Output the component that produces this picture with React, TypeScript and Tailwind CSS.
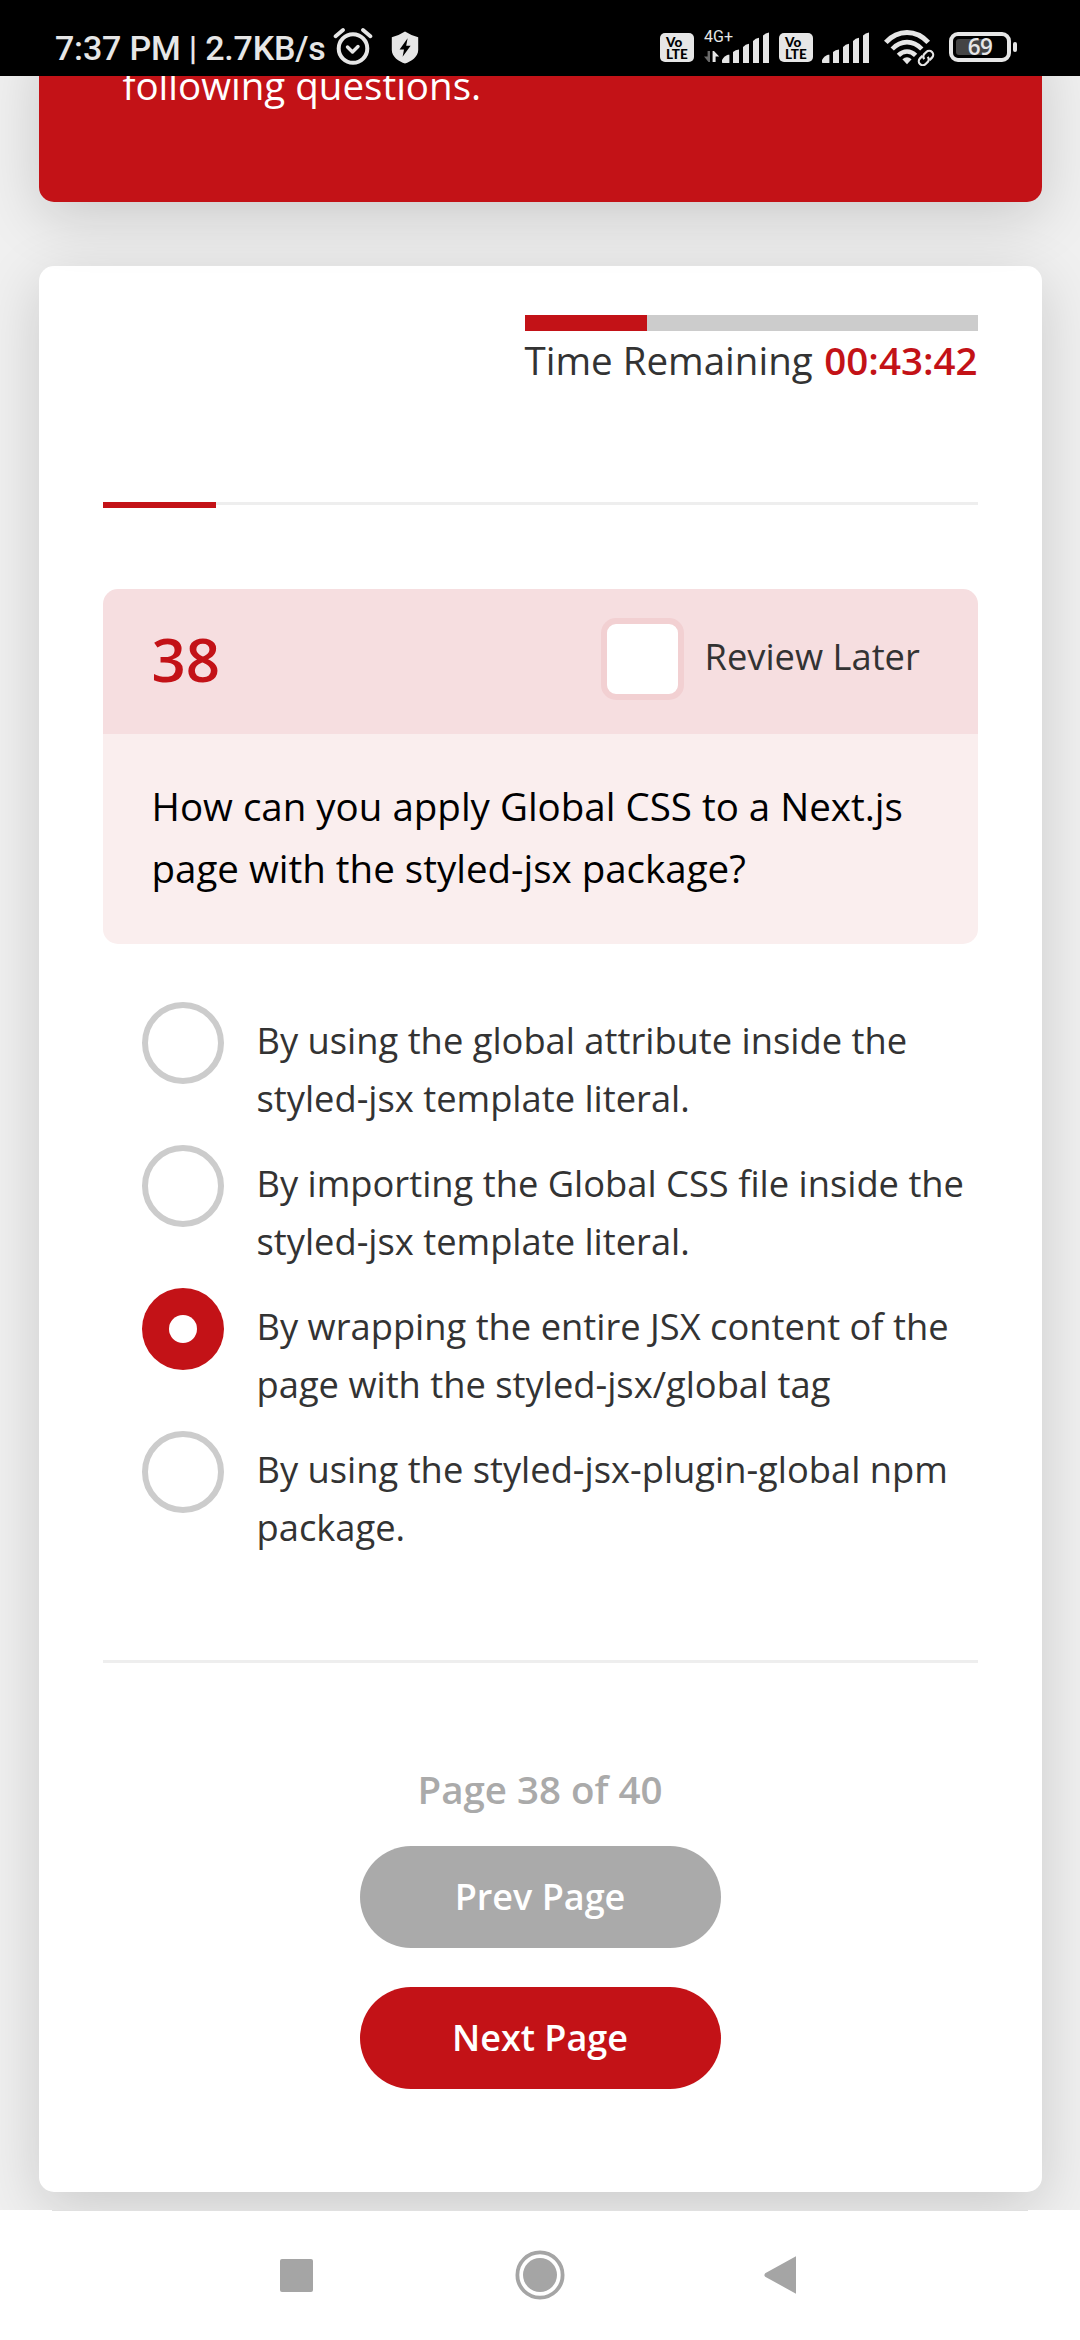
import React from "react";

const FG = "#e6e6e6";

function AlarmIcon() {
  return (
    <svg width="40" height="40" viewBox="0 0 40 40" fill="none" stroke={FG} strokeLinecap="round" strokeLinejoin="round" className="shrink-0">
      <circle cx="20" cy="21.5" r="14.3" strokeWidth="4" />
      <path d="M14.5 20 L19.5 25 L25 19.5" strokeWidth="3.4" />
      <path d="M2.6 9.2 L10 3" strokeWidth="3.8" />
      <path d="M37.4 9.2 L30 3" strokeWidth="3.8" />
    </svg>
  );
}

function ShieldIcon() {
  return (
    <svg width="28" height="33" viewBox="0 0 28 33" className="shrink-0">
      <path d="M14 .6 Q20 4.6 27.2 6.2 V19 C27.2 26 20 30.5 14 32.6 C8 30.5 .8 26 .8 19 V6.2 Q8 4.6 14 .6 Z" fill={FG} />
      <path d="M16.6 7.2 L8.6 18.6 H13 L11.6 25.8 L19.6 14.8 H15.2 Z" fill="#000" />
    </svg>
  );
}

function VoLte() {
  return (
    <div className="flex h-[29px] w-[34px] shrink-0 flex-col rounded-[5px] bg-[#e6e6e6] pl-[6px] pt-[3px] font-[Lato,sans-serif] text-[13.5px] font-black leading-[12px] text-black">
      <span>Vo</span>
      <span>LTE</span>
    </div>
  );
}

function Signal() {
  return (
    <svg width="48" height="31" viewBox="0 0 48 31" fill={FG} className="shrink-0">
      <path d="M.5 31 Q0 31 0 30 V28 Q2.5 23.6 6 22.8 H7.4 V31 Z" />
      <path d="M11 31 V20 Q13.5 17.8 17 17.6 V31 Z" />
      <path d="M21 31 V15 Q23.5 12 27 11.8 V31 Z" />
      <path d="M31 31 V9 Q33.5 6 37 5.8 V31 Z" />
      <path d="M41 31 V3.5 Q43.5 .6 47 .4 V31 Z" />
    </svg>
  );
}

function WifiIcon() {
  return (
    <svg width="51" height="36" viewBox="0 0 51 36" fill="none" stroke={FG} className="shrink-0">
      <path d="M1.8 12.4 C14 -.8 32 -.8 44.2 12.4" strokeWidth="5" />
      <path d="M8.2 19 C17 9.8 29 9.8 37.8 19" strokeWidth="4.6" />
      <path d="M14.4 25.4 C19.6 20.2 26.4 20.2 31.6 25.4" strokeWidth="4.6" />
      <path d="M23 34.2 L18.4 29.2 Q23 25.2 27.6 29.2 Z" fill={FG} stroke="none" />
      <g transform="rotate(-45 42 28)">
        <rect x="31.5" y="22" width="21" height="12" rx="6" fill="#000" stroke="none" />
        <path d="M41 24 H37.5 A4 4 0 0 0 37.5 32 H41 A4 4 0 0 0 44 28.4" strokeWidth="2.2" />
        <path d="M43 32 H46.5 A4 4 0 0 0 46.5 24 H43 A4 4 0 0 0 40 27.6" strokeWidth="2.2" />
      </g>
    </svg>
  );
}

function StatusBar() {
  return (
    <header className="relative z-20 flex h-[76px] shrink-0 items-start bg-black font-[Roboto,sans-serif] text-[#e6e6e6]">
      <span className="ml-[55px] mt-[28px] w-[272px] whitespace-nowrap text-[34px] font-medium leading-[40px] tracking-[-0.2px]">
        7:37 PM | 2.7KB/s
      </span>
      <div className="ml-[6px] mt-[27px]"><AlarmIcon /></div>
      <div className="ml-[18px] mt-[31px]"><ShieldIcon /></div>
      <div className="ml-auto mt-[33px]"><VoLte /></div>
      <div className="ml-[10px] mt-[29px] w-[30px]">
        <div className="whitespace-nowrap text-[16px] leading-[16px]">4G+</div>
        <svg width="16" height="12" viewBox="0 0 16 12" className="mt-[6px]">
          <path d="M6 0 V11 H4.5 L0 5.5 H3.6 V0 Z" fill="#6a6a6a" />
          <path d="M8.6 11 V0 H10 L15.2 5.5 H11.6 V11 Z" fill={FG} />
        </svg>
      </div>
      <div className="-ml-[12px] mt-[32px]"><Signal /></div>
      <div className="ml-[9px] mt-[33px]"><VoLte /></div>
      <div className="ml-[9px] mt-[32px]"><Signal /></div>
      <div className="ml-[14px] mt-[30px]"><WifiIcon /></div>
      <div className="ml-[14px] mt-[32px] flex items-center">
        <div className="relative flex h-[30px] w-[62px] items-center justify-center rounded-[9px] border-4 border-[#e6e6e6]">
          <div className="absolute left-[3px] top-[3px] h-4 w-[33px] rounded-[3px] bg-[#444]" />
          <span className="relative font-['Open_Sans',sans-serif] text-[22.5px] font-semibold leading-[22px] tracking-[-0.5px]">69</span>
        </div>
        <div className="ml-[2px] h-[10px] w-[4px] rounded-[2px] bg-[#e6e6e6]" />
      </div>
      <div className="w-[63px] shrink-0" />
    </header>
  );
}

const options = [
  { lines: ["By using the global attribute inside the", "styled-jsx template literal."], selected: false },
  { lines: ["By importing the Global CSS file inside the", "styled-jsx template literal."], selected: false },
  { lines: ["By wrapping the entire JSX content of the", "page with the styled-jsx/global tag"], selected: true },
  { lines: ["By using the styled-jsx-plugin-global npm", "package."], selected: false },
];

function Radio({ selected }: { selected: boolean }) {
  return selected ? (
    <span className="flex size-[82px] shrink-0 items-center justify-center rounded-full bg-[#c31217]">
      <span className="size-[28px] rounded-full bg-white" />
    </span>
  ) : (
    <span className="size-[82px] shrink-0 rounded-full border-[6px] border-[#ccc] bg-white" />
  );
}

function QuizCard() {
  return (
    <section className="mx-auto mt-[64px] flex h-[1926px] w-[1003px] shrink-0 flex-col rounded-[15px] bg-white px-[64px] pt-[49px] shadow-[0_15px_60px_rgba(0,0,0,0.16)]">
      <div className="w-[453px] self-end">
        <div className="h-4 bg-[#ccc]">
          <div className="h-4 w-[122px] bg-[#c31217]" />
        </div>
        <p className="flex justify-between whitespace-nowrap text-[38.5px] leading-[58px] text-[#333]">
          <span>Time Remaining</span>
          <span className="font-semibold text-[#c31217]">00:43:42</span>
        </p>
      </div>

      <div className="mt-[113px] h-[6px]">
        <div className="h-[3px] bg-[#eee]">
          <div className="h-[6px] w-[113px] bg-[#c31217]" />
        </div>
      </div>

      <div className="mt-[81px] overflow-hidden rounded-[15px]">
        <div className="flex h-[145px] items-center bg-[#f6dee0] pb-[5px] pl-[49px]">
          <span className="text-[60px] font-semibold leading-[82px] text-[#c31217]">38</span>
          <span className="ml-auto h-[82px] w-[83px] rounded-[15px] border-[6px] border-[#f2d0d2] bg-white" />
          <span className="mb-[6px] ml-[21px] w-[273px] whitespace-nowrap text-[36.3px] leading-[49px] text-[#333]">Review Later</span>
        </div>
        <div className="h-[210px] whitespace-nowrap bg-[#faeeee] pl-[49px] pt-[41px] text-[38.5px] leading-[62px] text-black">
          How can you apply Global CSS to a Next.js
          <br />
          page with the styled-jsx package?
        </div>
      </div>

      <ul className="mt-[58px] pl-[39px]">
        {options.map((o) => (
          <li key={o.lines[0]} className="flex h-[143px]">
            <Radio selected={o.selected} />
            <p className="ml-[33px] mt-[9px] whitespace-nowrap text-[36.3px] leading-[58px] text-[#333]">
              {o.lines[0]}
              <br />
              {o.lines[1]}
            </p>
          </li>
        ))}
      </ul>

      <div className="mt-[86px] h-[3px] shrink-0 bg-[#eee]" />

      <div className="flex flex-col items-center font-semibold">
        <p className="mt-[100px] text-[38.5px] leading-[53px] text-[#aaa]">Page 38 of 40</p>
        <button className="mt-[30px] h-[102px] w-[361px] rounded-full bg-[#aaa] pb-[2px] text-[36px] leading-[49px] text-white">Prev Page</button>
        <button className="mt-[39px] h-[102px] w-[361px] rounded-full bg-[#c31217] pb-[2px] text-[36px] leading-[49px] text-white">Next Page</button>
      </div>
    </section>
  );
}

function NavBar() {
  return (
    <nav className="relative z-20 h-[130px] shrink-0 bg-white">
      <div className="mx-[52px] h-px bg-[#e0e0e0]" />
      <div className="flex items-center pl-[280px] pt-[39px]">
        <div className="size-[33px] rounded-[2px] bg-[#a5a5a5]" />
        <svg width="50" height="50" viewBox="0 0 50 50" className="ml-[202px]">
          <circle cx="25" cy="25" r="22.6" fill="none" stroke="#a5a5a5" strokeWidth="3.8" />
          <circle cx="25" cy="25" r="17" fill="#a5a5a5" />
        </svg>
        <svg width="33" height="38" viewBox="0 0 33 38" className="ml-[199px]">
          <path d="M32 .3 V37.7 L1.2 20.8 Q-.4 19 1.2 17.2 Z" fill="#a5a5a5" />
        </svg>
      </div>
    </nav>
  );
}

export default function App() {
  return (
    <div className="flex h-[2340px] w-[1080px] flex-col overflow-hidden bg-[#f0f0f0] font-['Open_Sans',sans-serif]">
      <StatusBar />
      <section className="relative z-10 mx-auto -mt-[40px] h-[166px] w-[1003px] shrink-0 rounded-[15px] bg-[#c31217] pl-[84px] pt-[20px] shadow-[0_15px_60px_rgba(0,0,0,0.16)]">
        <p className="whitespace-nowrap text-[38.5px] leading-[58px] text-white">following questions.</p>
      </section>
      <QuizCard />
      <div className="h-[18px] shrink-0" />
      <NavBar />
    </div>
  );
}
